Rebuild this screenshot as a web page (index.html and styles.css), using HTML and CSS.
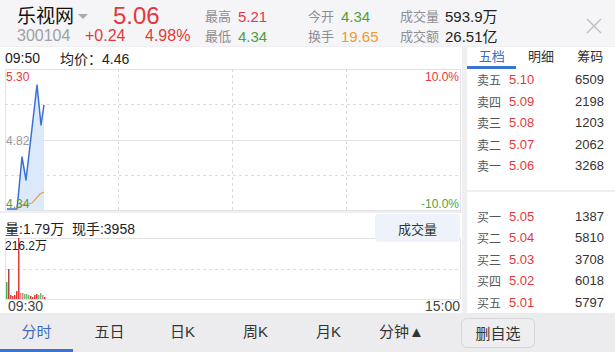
FILE: index.html
```html
<!DOCTYPE html>
<html lang="zh">
<head>
    <meta charset="UTF-8">
    <meta name="viewport" content="width=device-width, initial-scale=1.0">
    <title>乐视网 300104</title>
    <link rel="stylesheet" href="styles.css">
</head>
<body>
    <header class="quote-head">
        <div class="qh-main">
            <div class="qh-line">
                <span class="stock-name">乐视网</span>
                <span class="caret"></span>
                <span class="last up">5.06</span>
            </div>
            <div class="qh-line">
                <span class="code">300104</span>
                <span class="chg up">+0.24</span>
                <span class="pct up">4.98%</span>
            </div>
        </div>
        <div class="qh-grp g1">
            <div class="qh-line"><span class="lbl">最高</span><span class="val up">5.21</span></div>
            <div class="qh-line"><span class="lbl">最低</span><span class="val down">4.34</span></div>
        </div>
        <div class="qh-grp g2">
            <div class="qh-line"><span class="lbl">今开</span><span class="val down">4.34</span></div>
            <div class="qh-line"><span class="lbl">换手</span><span class="val warm">19.65</span></div>
        </div>
        <div class="qh-grp g3">
            <div class="qh-line"><span class="lbl">成交量</span><span class="val">593.9万</span></div>
            <div class="qh-line"><span class="lbl">成交额</span><span class="val">26.51亿</span></div>
        </div>
        <div class="close-btn">
            <svg width="18" height="16" viewBox="0 0 18 16">
                <path d="M2 1 L16 15 M16 1 L2 15" stroke="#bdbdc2" stroke-width="1.4" fill="none"/>
            </svg>
        </div>
    </header>

    <div class="board">
        <div class="chart-col">
            <div class="card">
                <div class="info-row">
                    <span class="info-time">09:50</span>
                    <span>均价：4.46</span>
                </div>
                <svg class="price-chart" width="456" height="142" viewBox="0 0 456 142">
                    <g stroke="#e3e3e6" stroke-width="1" fill="none">
                        <rect x="0.5" y="0.5" width="455" height="141"/>
                        <line x1="0" y1="71.5" x2="456" y2="71.5"/>
                    </g>
                    <g stroke="#dcdce0" stroke-width="1" stroke-dasharray="3 3" fill="none">
                        <line x1="0" y1="35.5" x2="456" y2="35.5"/>
                        <line x1="0" y1="106.5" x2="456" y2="106.5"/>
                        <line x1="113.5" y1="0" x2="113.5" y2="142"/>
                        <line x1="227.5" y1="0" x2="227.5" y2="142"/>
                        <line x1="341.5" y1="0" x2="341.5" y2="142"/>
                    </g>
                    <polygon points="2,140 12,140 17,88 21,111 32,16 36,56 39,36 39,141 2,141" fill="#dce9fb"/>
                    <polyline points="2,140 12,140 17,88 21,111 32,16 36,56 39,36" fill="none" stroke="#3a70d6" stroke-width="1.5" stroke-linejoin="round"/>
                    <polyline points="12,140 17,136 27,134 35,125 39,123" fill="none" stroke="#e9a04c" stroke-width="1.2"/>
                    <g class="axis-txt">
                        <text x="1" y="12" fill="#e5383b">5.30</text>
                        <text x="1" y="76" fill="#9a9aa0">4.82</text>
                        <text x="1" y="139" fill="#4ba33a">4.34</text>
                        <text x="454" y="12" fill="#e5383b" text-anchor="end">10.0%</text>
                        <text x="454" y="139" fill="#4ba33a" text-anchor="end">-10.0%</text>
                    </g>
                </svg>
            </div>

            <div class="card vol-card">
                <div class="vol-head">
                    <span>量:1.79万&nbsp;&nbsp;现手:3958</span>
                    <span class="vol-btn">成交量</span>
                </div>
                <svg class="vol-chart" width="456" height="62" viewBox="0 0 456 62">
                    <g stroke="#e3e3e6" stroke-width="1" fill="none">
                        <line x1="0" y1="0.5" x2="456" y2="0.5"/>
                        <line x1="0" y1="61.5" x2="456" y2="61.5"/>
                        <line x1="0.5" y1="0" x2="0.5" y2="62"/>
                        <line x1="455.5" y1="0" x2="455.5" y2="62"/>
                    </g>
                    <line x1="0" y1="31.5" x2="456" y2="31.5" stroke="#dcdce0" stroke-dasharray="3 3"/>
                    <g>
                        <rect x="1" y="44" width="1.5" height="17" fill="#4fae5a"/>
                        <rect x="3" y="31" width="1.5" height="30" fill="#b2433f"/>
                        <rect x="5" y="57" width="1.5" height="4" fill="#e5383b"/>
                        <rect x="7" y="58" width="1.5" height="3" fill="#e5383b"/>
                        <rect x="9" y="57" width="1.5" height="4" fill="#e5383b"/>
                        <rect x="11" y="53" width="1.5" height="8" fill="#e5383b"/>
                        <rect x="13" y="0" width="1.5" height="61" fill="#e5383b"/>
                        <rect x="15" y="55" width="1.5" height="6" fill="#ef8080"/>
                        <rect x="17" y="55" width="1.5" height="6" fill="#ef8080"/>
                        <rect x="19" y="56" width="1.5" height="5" fill="#6dbd78"/>
                        <rect x="21" y="56" width="1.5" height="5" fill="#6dbd78"/>
                        <rect x="23" y="57" width="1.5" height="4" fill="#6dbd78"/>
                        <rect x="25" y="58" width="1.5" height="3" fill="#e5383b"/>
                        <rect x="27" y="59" width="1.5" height="2" fill="#e5383b"/>
                        <rect x="29" y="57" width="1.5" height="4" fill="#e5383b"/>
                        <rect x="31" y="56" width="1.5" height="5" fill="#e5383b"/>
                        <rect x="33" y="57" width="1.5" height="4" fill="#6dbd78"/>
                        <rect x="35" y="55" width="1.5" height="6" fill="#6dbd78"/>
                        <rect x="37" y="57" width="1.5" height="4" fill="#ef8080"/>
                        <rect x="39" y="59" width="1.5" height="2" fill="#e5383b"/>
                    </g>
                    <text x="0" y="12" class="vol-max">216.2万</text>
                </svg>
                <div class="time-row">
                    <span>09:30</span>
                    <span>15:00</span>
                </div>
            </div>
        </div>

        <aside class="book">
            <div class="book-tabs">
                <span class="book-tab active">五档</span>
                <span class="book-tab">明细</span>
                <span class="book-tab">筹码</span>
            </div>
            <div class="book-side sell">
                <div class="row"><span class="nm">卖五</span><span class="px">5.10</span><span class="vol">6509</span></div>
                <div class="row"><span class="nm">卖四</span><span class="px">5.09</span><span class="vol">2198</span></div>
                <div class="row"><span class="nm">卖三</span><span class="px">5.08</span><span class="vol">1203</span></div>
                <div class="row"><span class="nm">卖二</span><span class="px">5.07</span><span class="vol">2062</span></div>
                <div class="row"><span class="nm">卖一</span><span class="px">5.06</span><span class="vol">3268</span></div>
            </div>
            <div class="book-side buy">
                <div class="row"><span class="nm">买一</span><span class="px">5.05</span><span class="vol">1387</span></div>
                <div class="row"><span class="nm">买二</span><span class="px">5.04</span><span class="vol">5810</span></div>
                <div class="row"><span class="nm">买三</span><span class="px">5.03</span><span class="vol">3708</span></div>
                <div class="row"><span class="nm">买四</span><span class="px">5.02</span><span class="vol">6018</span></div>
                <div class="row"><span class="nm">买五</span><span class="px">5.01</span><span class="vol">5797</span></div>
            </div>
        </aside>
    </div>

    <nav class="period-bar">
        <span class="period active">分时</span>
        <span class="period">五日</span>
        <span class="period">日K</span>
        <span class="period">周K</span>
        <span class="period">月K</span>
        <span class="period">分钟▲</span>
        <span class="fav-btn">删自选</span>
    </nav>
</body>
</html>
```

FILE: styles.css
```css
* {
    box-sizing: border-box;
}

body {
    margin: 0;
    width: 615px;
    height: 352px;
    overflow: hidden;
    background-color: #efeff1;
    color: #222;
    font-family: "Liberation Sans", "Noto Sans CJK SC", sans-serif;
}

.up { color: #e5383b; }
.down { color: #4ba33a; }
.warm { color: #f29a2e; }

/* header */
.quote-head {
    height: 46px;
    display: flex;
    padding-top: 5px;
    background-color: #f5f5f7;
}

.qh-line {
    display: flex;
    align-items: center;
    height: 22px;
    line-height: 1;
    white-space: nowrap;
}

.qh-line + .qh-line {
    height: 18px;
}

.qh-main {
    width: 205px;
    padding-left: 17px;
}

.stock-name {
    width: 61px;
    font-size: 19px;
    color: #111;
}

.caret {
    width: 0;
    height: 0;
    border-left: 5px solid transparent;
    border-right: 5px solid transparent;
    border-top: 5px solid #a9a9ae;
    margin-top: 1px;
}

.last {
    margin-left: 25px;
    font-size: 24px;
}

.code {
    width: 68px;
    font-size: 16px;
    color: #a0a0a5;
}

.chg {
    width: 60px;
    font-size: 16px;
}

.pct {
    font-size: 16px;
}

.g1 { width: 103px; }
.g2 { width: 92px; }
.g3 { width: 160px; }

.lbl {
    width: 33px;
    font-size: 13px;
    color: #8e8e93;
}

.g3 .lbl {
    width: 45px;
}

.val {
    font-size: 15px;
}

.close-btn {
    margin-left: auto;
    margin-right: 12px;
    padding-top: 13px;
}

/* main board */
.board {
    display: flex;
    gap: 5px;
    height: 266px;
    margin-top: 1px;
}

.chart-col {
    width: 462px;
    display: flex;
    flex-direction: column;
    gap: 2px;
}

.card {
    background-color: #fff;
}

.info-row {
    height: 22px;
    display: flex;
    align-items: center;
    padding-left: 5px;
    font-size: 14px;
}

.info-time {
    width: 55px;
}

.price-chart,
.vol-chart {
    display: block;
    margin-left: 5px;
}

.axis-txt text {
    font-size: 12px;
    font-family: "Liberation Sans", sans-serif;
}

.vol-card {
    flex: 1;
}

.vol-head {
    height: 25px;
    display: flex;
    justify-content: space-between;
    align-items: flex-start;
    padding: 0 2px 0 5px;
    font-size: 14px;
}

.vol-head > span:first-child {
    padding-top: 5px;
}

.vol-btn {
    position: relative;
    z-index: 1;
    width: 85px;
    height: 28px;
    margin-top: 1px;
    display: flex;
    align-items: center;
    justify-content: center;
    background-color: #eef2fa;
    border-radius: 4px;
    font-size: 13px;
    color: #333;
}

.vol-max {
    font-size: 12px;
    fill: #222;
    font-family: "Liberation Sans", "Noto Sans CJK SC", sans-serif;
}

.time-row {
    height: 13px;
    line-height: 13px;
    display: flex;
    justify-content: space-between;
    padding: 0 2px 0 8px;
    font-size: 14px;
    color: #444;
}

/* order book */
.book {
    flex: 1;
    background-color: #fff;
    display: flex;
    flex-direction: column;
}

.book-tabs {
    height: 22px;
    display: flex;
}

.book-tab {
    flex: 1;
    text-align: center;
    font-size: 13px;
    line-height: 19px;
    color: #333;
}

.book-tab.active {
    color: #3d6bc4;
    border-bottom: 3px solid #3b73d4;
}

.book-side.sell {
    padding-bottom: 13px;
    border-bottom: 2px solid #efeff1;
}

.book-side.buy {
    padding-top: 14px;
}

.row {
    height: 21.5px;
    display: flex;
    align-items: center;
    padding: 0 11px 0 10px;
}

.nm {
    width: 32px;
    font-size: 12px;
    color: #555;
}

.px {
    font-size: 13px;
    color: #e5383b;
}

.vol {
    margin-left: auto;
    font-size: 13px;
    color: #333;
}

/* bottom bar */
.period-bar {
    height: 39px;
    display: flex;
    align-items: center;
    background-color: #ececee;
}

.period {
    width: 73px;
    height: 39px;
    line-height: 38px;
    text-align: center;
    font-size: 15px;
    color: #333;
}

.period.active {
    color: #3d6bc4;
    border-bottom: 3px solid #3b73d4;
}

.fav-btn {
    margin-left: 23px;
    width: 74px;
    height: 30px;
    display: flex;
    align-items: center;
    justify-content: center;
    border: 1px solid #d6d6da;
    border-radius: 6px;
    background-color: #eeeef0;
    font-size: 15px;
    color: #333;
}
```
